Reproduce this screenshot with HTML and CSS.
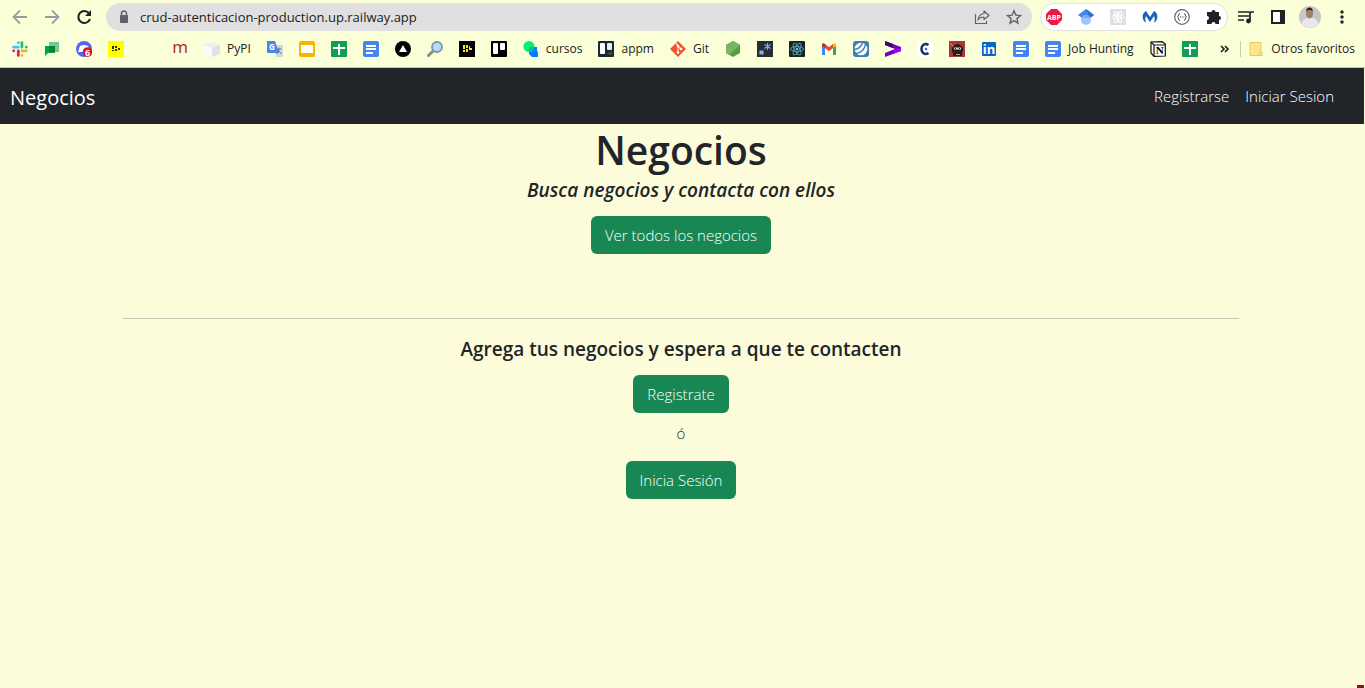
FILE: index.html
```html
<!DOCTYPE html>
<html lang="es">
<head>
<meta charset="utf-8">
<title>Negocios</title>
<link rel="stylesheet" href="styles.css">
</head>
<body>
<svg class="defs" width="0" height="0" aria-hidden="true">
  <symbol id="docs" viewBox="0 0 16 16"><rect width="16" height="16" rx="2" fill="#4285f4"/><path d="M3 4h10v2H3zM3 7h10v2H3zM3 11h7v2H3z" fill="#fff"/></symbol>
  <symbol id="sheets" viewBox="0 0 16 16"><rect width="16" height="16" rx="1" fill="#0f9d58"/><path d="M7 3h2v3h5v2H9v6H7V8H2V6h5z" fill="#fff"/></symbol>
</svg>
<header class="browser">
  <div class="toolbar">
    <button class="nav-btn" aria-label="Atrás"><svg class="i16" viewBox="0 0 16 16"><path d="M15 8H2M8 1.500L1.500 8 8 14.500" fill="none" stroke="#9a9ca0" stroke-width="1.800"/></svg></button>
    <button class="nav-btn" aria-label="Adelante"><svg class="i16" viewBox="0 0 16 16"><path d="M1 8h13M8 1.500L14.500 8 8 14.500" fill="none" stroke="#9a9ca0" stroke-width="1.800"/></svg></button>
    <button class="nav-btn" aria-label="Recargar"><svg class="i16" viewBox="0 0 16 16"><path d="M13 4.200A6 6 0 1 0 14 10" fill="none" stroke="#202124" stroke-width="2.100"/><path d="M15 1v6H9z" fill="#202124"/></svg></button>
    <div class="address">
      <svg class="i16" viewBox="0 0 16 16"><path d="M5.500 7V4.500a2.500 2.500 0 0 1 5 0V7" fill="none" stroke="#5f6368" stroke-width="1.500"/><rect x="4" y="6" width="8" height="8" rx="1" fill="#5f6368"/></svg>
      <input class="url" type="text" aria-label="Dirección" value="crud-autenticacion-production.up.railway.app">
      <button class="nav-btn" aria-label="Compartir"><svg class="i16" viewBox="0 0 16 16"><path d="M1.500 5v9.500h11V12M10 2l5 4.500-5 4V8C7 8 5 9 4 11c.3-3.500 2.500-6 6-6.500z" fill="none" stroke="#5f6368" stroke-width="1.200" stroke-linejoin="round"/></svg></button>
      <button class="nav-btn" aria-label="Favorito"><svg class="i16" viewBox="0 0 16 16"><path d="M8 1.800l1.800 4.300 4.700.4-3.600 3.100 1.100 4.600L8 11.700l-4 2.500 1.100-4.600-3.600-3.100 4.700-.4z" fill="none" stroke="#5f6368" stroke-width="1.400"/></svg></button>
    </div>
    <div class="extensions">
      <svg class="i16" viewBox="0 0 16 16"><path d="M5 0h6l5 5v6l-5 5H5l-5-5V5z" fill="#ed1944"/><text x="8" y="11" font-size="7" font-weight="700" fill="#fff" text-anchor="middle">ABP</text></svg>
      <svg class="i16" viewBox="0 0 16 16"><path d="M8 0L0 6l4 3h8l4-3z" fill="#4285f4"/><path d="M8 0l8 6-4 3z" fill="#356ac3"/><circle cx="8" cy="11" r="5" fill="#a0c3ff"/><path d="M3.500 9a5 5 0 0 1 9 0z" fill="#76a7fa"/></svg>
      <svg class="i16" viewBox="0 0 16 16"><rect width="16" height="16" fill="#dfdfdf"/><g fill="none" stroke="#fff"><ellipse cx="8" cy="8" rx="6" ry="2.300"/><ellipse cx="8" cy="8" rx="6" ry="2.300" transform="rotate(60 8 8)"/><ellipse cx="8" cy="8" rx="6" ry="2.300" transform="rotate(120 8 8)"/></g><circle cx="8" cy="8" r="1.400" fill="#fff"/></svg>
      <svg class="i16" viewBox="0 0 16 16"><path d="M4 2l4 6 4-6c3 1.500 4 5 3 8-.5 2-1.500 3-3 3.500 1-2.500 1-4 0-6.500l-4 6-4-6c-1 2.500-1 4 0 6.500-1.500-.5-2.500-1.500-3-3.500-1-3 0-6.500 3-8z" fill="#1c62b5"/></svg>
      <svg class="i16" viewBox="0 0 16 16"><circle cx="8" cy="8" r="7.300" fill="#fff" stroke="#666" stroke-width="1.200"/><path d="M6 4.500c-2 0-1 3-2.500 3.500C5 8.500 4 11.500 6 11.500M10 4.500c2 0 1 3 2.500 3.500C11 8.500 12 11.500 10 11.500" fill="none" stroke="#555"/><path d="M6 7.500h1v1H6zM7.700 7.500h1v1h-1zM9.400 7.500h1v1h-1z" fill="#555"/></svg>
      <svg class="i16" viewBox="0 0 16 16"><path d="M1 3h4.500a2 2 0 1 1 4 0H13v4a2 2 0 1 1 0 4v4H9.500a2 2 0 0 0-4 0H1v-4a2 2 0 0 0 0-4z" fill="#202124"/></svg>
    </div>
    <div class="tools">
      <svg class="i16" viewBox="0 0 16 16"><path d="M0 3h11M0 7h11M0 11h6M12 12V3h4" fill="none" stroke="#202124" stroke-width="1.700"/><circle cx="10.500" cy="12" r="2.400" fill="#202124"/></svg>
      <svg class="i16" viewBox="0 0 16 16"><path d="M1 1h14v14H1z" fill="#202124"/><path d="M3 3h7v10H3z" fill="#fff"/></svg>
      <svg class="avatar" viewBox="0 0 22 22"><circle cx="11" cy="11" r="11" fill="#c8c7c5"/><path d="M3 18c0-5 4-6 8-6s8 1 8 6c-4 5-12 5-16 0z" fill="#e8e8ee"/><ellipse cx="10.500" cy="7.500" rx="3.500" ry="5" fill="#a67c64"/><path d="M7 5.500c0-5.500 7-5.500 7 0-1-2-6-2-7 0z" fill="#2c2524"/></svg>
      <svg class="i16" viewBox="0 0 16 16"><g fill="#202124"><circle cx="8" cy="3" r="1.700"/><circle cx="8" cy="8" r="1.700"/><circle cx="8" cy="13" r="1.700"/></g></svg>
    </div>
  </div>
  <nav class="bookmarks" aria-label="Favoritos">
    <svg class="i16" viewBox="0 0 16 16"><g stroke-width="2.800" stroke-linecap="round"><path d="M6.300 1.600v.2M1.600 6.200h4.700" stroke="#36c5f0"/><path d="M9.900 1.600v4.600M14.300 6.200h.1" stroke="#2eb67d"/><path d="M9.900 9.800h4.500M9.900 14.300v.1" stroke="#ecb22e"/><path d="M6.300 9.800v4.600M1.600 9.800h.2" stroke="#e01e5a"/></g></svg>
    <svg class="i16" viewBox="0 0 16 16"><path d="M5 1h10v10H5z" fill="#76c88e"/><path d="M1 5h10v7H4l-3 3z" fill="#00a545"/><path d="M5 5h6v6H5z" fill="#087f3e"/></svg>
    <svg class="i16" viewBox="0 0 16 16"><circle cx="8" cy="8" r="8" fill="#5865f2"/><path d="M4 5q4-2 8 0l2 6H2z" fill="#fff"/><circle cx="11.500" cy="11" r="4.800" fill="#d8171e"/><text x="11.500" y="14.500" font-size="9" font-weight="700" fill="#fff" text-anchor="middle">6</text></svg>
    <svg class="i16" viewBox="0 0 16 16"><path d="M0 0h16v16H0z" fill="#ff0"/><path d="M4 5h2v3H4zM7 5h2v2H7zM4 9h2v1H4zM7 8h2v2H7zM10 7h2v2h-2z" fill="#333300"/></svg>
    <span class="i16"></span>
    <svg class="i16" viewBox="0 0 16 16"><text x="8" y="12" font-size="17" fill="#a61e2b" text-anchor="middle">m</text></svg>
    <a class="mark" href="#"><svg class="i16" viewBox="0 0 16 16"><path d="M0 4l8-3 8 3v9l-8 3-8-3z" fill="#efefef"/><path d="M0 4l8 3v9l-8-3z" fill="#fafafa"/><path d="M8 7l8-3v9l-8 3z" fill="#e2e2e2"/></svg>PyPI</a>
    <svg class="i16" viewBox="0 0 16 16"><path d="M7 4h9v12H9z" fill="#d5d7db"/><path d="M0 0h8l4 12H1a1 1 0 0 1-1-1z" fill="#4688f1"/><text x="5" y="9" font-size="8" font-weight="700" fill="#fff" text-anchor="middle">G</text><path d="M9.500 8h5M12 6.500V8c-.3 3-1 4-2.500 5M11 9l3.500 4" stroke="#607988" fill="none"/></svg>
    <svg class="i16" viewBox="0 0 16 16"><rect width="16" height="16" rx="2" fill="#f8b400"/><path d="M2 4h12v8H2z" fill="#fff"/></svg>
    <svg class="i16"><use href="#sheets"/></svg>
    <svg class="i16"><use href="#docs"/></svg>
    <svg class="i16" viewBox="0 0 16 16"><circle cx="8" cy="8" r="8"/><path d="M8 4l4 7H4z" fill="#fff"/></svg>
    <svg class="i16" viewBox="0 0 16 16"><path d="M1.500 14.500L6 10" stroke="#8b8c8c" stroke-width="3" stroke-linecap="round"/><circle cx="10" cy="6" r="5" fill="#badaf4" stroke="#7897a5" stroke-width="1.800"/></svg>
    <svg class="i16" viewBox="0 0 16 16"><path d="M0 0h16v16H0z"/><path d="M4 4h2v4H4zM7 4h2v3H7zM4 9h2v2H4zM7 8h2v3H7zM10 5h1v4h-1zM11 7h2v2h-2z" fill="#f8ed12"/></svg>
    <svg class="i16" viewBox="0 0 16 16"><rect width="16" height="16" rx="1"/><rect x="2" y="2" width="5" height="11" rx="1" fill="#fff"/><rect x="9" y="2" width="5" height="7" rx="1" fill="#fff"/></svg>
    <a class="mark" href="#"><svg class="i16" viewBox="0 0 16 16"><path d="M6 6h8v4l1 1v5H9l-3-3z" fill="#087cff"/><circle cx="6" cy="5.500" r="5.500" fill="#00f078"/><path d="M6 6h5.500a5.500 5.500 0 0 1-5.500 5z" fill="#00b7a2"/></svg>cursos</a>
    <a class="mark" href="#"><svg class="i16" viewBox="0 0 16 16"><rect width="16" height="16" rx="1" fill="#1c2830"/><path d="M8 13l6-3v4z" fill="#504538"/><rect x="2" y="2" width="5" height="11" rx="1" fill="#fff"/><rect x="9" y="2" width="5" height="7" rx="1" fill="#e9eef2"/></svg>appm</a>
    <a class="mark" href="#"><svg class="i16" viewBox="0 0 16 16"><path d="M8 0l8 8-8 8-8-8z" fill="#f5522d"/><path d="M6 2l2 3v7M8 5l3 3" fill="none" stroke="#fff" stroke-width="1.100"/><g fill="#fff"><circle cx="8" cy="5" r="1.300"/><circle cx="11" cy="8" r="1.300"/><circle cx="8" cy="11.500" r="1.300"/></g></svg>Git</a>
    <svg class="i16" viewBox="0 0 16 16"><path d="M8 0l7 4v8l-7 4-7-4V4z" fill="#539e43"/><path d="M8 0l7 4L4 13.700 1 12V4z" fill="#78b461"/></svg>
    <svg class="i16" viewBox="0 0 16 16"><path d="M0 0h16v16H0z" fill="#292d33"/><path d="M3 10h3v3H3zM10.500 2v7M7.500 3.500l6 4M13.500 3.500l-6 4" fill="#77b6eb" stroke="#77b6eb" stroke-width="1.100"/></svg>
    <svg class="i16" viewBox="0 0 16 16"><rect width="16" height="16" rx="1" fill="#202124"/><g fill="none" stroke="#4ba8bd" stroke-width=".9"><ellipse cx="8" cy="8" rx="6.500" ry="2.500"/><ellipse cx="8" cy="8" rx="6.500" ry="2.500" transform="rotate(60 8 8)"/><ellipse cx="8" cy="8" rx="6.500" ry="2.500" transform="rotate(120 8 8)"/></g><circle cx="8" cy="8" r="1.200" fill="#61dafb"/></svg>
    <svg class="i16" viewBox="0 0 16 16"><path d="M1 4h3v10H2a1 1 0 0 1-1-1z" fill="#4285f4"/><path d="M12 4h3v9a1 1 0 0 1-1 1h-2z" fill="#34a853"/><path d="M4 3l4 3.200L12 3v4L8 10.300 4 7z" fill="#ea4335"/><path d="M1 4c0-2 2-2 3-1v4L1 5z" fill="#c5221f"/><path d="M15 4c0-2-2-2-3-1v4l3-2z" fill="#fbbc04"/></svg>
    <svg class="i16" viewBox="0 0 16 16"><rect width="16" height="16" rx="3" fill="#3e7eb8"/><circle cx="8" cy="8" r="6.300" fill="#fff"/><path d="M1.500 8.500C6 8 8.500 5 9.500 1.500M3 12.500c5-.5 9-4.500 9.500-9.500" fill="none" stroke="#3e7eb8" stroke-width="1.400"/></svg>
    <svg class="i16" viewBox="0 0 16 16"><path d="M0 0l16 6v4L0 16v-4l10-4L0 4z" fill="#7500c0"/><path d="M0 0l8 3v4L0 4z" fill="#450073"/><path d="M10 8l6-1v3L8 13z" fill="#a100ff"/></svg>
    <svg class="i16" viewBox="0 0 16 16"><path d="M0 0h16v16H0z" fill="#fff"/><path d="M11.500 4C7.500 1.500 4.500 4.500 4.500 8s3 6.500 7 4" fill="none" stroke="#17345f" stroke-width="2.600"/><circle cx="9" cy="8" r="1.300" fill="#2e72d2"/></svg>
    <svg class="i16" viewBox="0 0 16 16"><path d="M0 0h16v16H0z" fill="#ad3636"/><path d="M1 2l11 12" stroke="#d4a844"/><path d="M4 15v-3a5.500 5.500 0 1 1 9 0v3z" fill="#211f20"/><path d="M5 6.500h7v2H5z" fill="#efd6b8"/><path d="M6 7h1v1H6zM10 7h1v1h-1z" fill="#222"/><path d="M7 13h4v1H7z" fill="#aaa"/></svg>
    <svg class="i16" viewBox="0 0 16 16"><rect x="1" y="1" width="14" height="14" rx="1" fill="#0a66c2"/><text x="8" y="13" font-size="13" font-weight="700" fill="#fff" text-anchor="middle">in</text></svg>
    <svg class="i16"><use href="#docs"/></svg>
    <a class="mark" href="#"><svg class="i16"><use href="#docs"/></svg>Job Hunting</a>
    <svg class="i16" viewBox="0 0 16 16"><path d="M1 1l11-.3L15.300 3v12L4 15.300 1 12z" fill="#fff" stroke="#111" stroke-width="1.200"/><path d="M1 1l3 3h11M4 4v11" fill="none" stroke="#111" stroke-width="1.200"/><text class="serif" x="9.700" y="13" font-size="11" font-weight="700" text-anchor="middle">N</text></svg>
    <svg class="i16"><use href="#sheets"/></svg>
    <div class="overflow">
      <button class="nav-btn" aria-label="Más favoritos"><svg class="i16" viewBox="0 0 16 16"><path d="M4 5l3 3-3 3M8 5l3 3-3 3" fill="none" stroke="#202124" stroke-width="1.700"/></svg></button>
      <span class="divider"></span>
      <a class="mark" href="#"><svg class="i16" viewBox="0 0 16 16"><path d="M2 1.500h11v13H2z" fill="#ffe58f" stroke="#edc85b"/><path d="M11 11h3v3.500h-3z" fill="#ffe58f" stroke="#edc85b"/></svg>Otros favoritos</a>
    </div>
  </nav>
</header>
<nav class="navbar">
  <a class="brand" href="#">Negocios</a>
  <div class="links"><a href="#">Registrarse</a><a href="#">Iniciar Sesion</a></div>
</nav>
<main class="page">
  <div class="container">
    <h1>Negocios</h1>
    <h2 class="lead">Busca negocios y contacta con ellos</h2>
    <button class="btn">Ver todos los negocios</button>
    <hr>
    <h2>Agrega tus negocios y espera a que te contacten</h2>
    <button class="btn">Registrate</button>
    <p>ó</p>
    <button class="btn">Inicia Sesión</button>
  </div>
</main>
<span class="corner"></span>
</body>
</html>
```
FILE: styles.css
```css
* { box-sizing: border-box; }
body {
  margin: 0;
  min-height: 100vh;
  position: relative;
  background: #fcfbda;
  color: #212529;
  font: 15px/24px "Open Sans", "Noto Sans", sans-serif;
}
a { color: inherit; text-decoration: none; }
button { font: inherit; color: inherit; border: 0; cursor: pointer; }
.defs { position: absolute; }
.i16 { display: block; width: 16px; height: 16px; flex: none; }
.serif { font-family: "Liberation Serif", serif; }
.browser {
  background: #fbffd7;
  border-bottom: 1px solid #c4c5bd;
  height: 68px;
  color: #202124;
  font-size: 12px;
}
.toolbar {
  display: flex;
  align-items: center;
  gap: 16px;
  height: 34px;
  padding: 0 15px 0 12px;
}
.nav-btn { display: block; padding: 0; background: none; }
.address {
  display: flex;
  flex: 1;
  align-items: center;
  gap: 16px;
  height: 28px;
  margin-left: -2px;
  padding: 0 10px;
  border-radius: 14px;
  background: #e0e0e0;
}
.url {
  flex: 1;
  min-width: 0;
  margin-left: -8px;
  padding: 0;
  border: 0;
  background: none;
  color: #202124;
  font: 13px/20px "Open Sans", "Noto Sans", sans-serif;
}
.extensions {
  display: flex;
  align-items: center;
  gap: 16px;
  height: 28px;
  margin-left: -8px;
  padding: 0 5px;
  border: 1px solid #e2e4d8;
  border-radius: 14px;
  background: #fff;
}
.tools { display: flex; align-items: center; gap: 16px; margin-left: -6px; }
.avatar { width: 22px; height: 22px; margin: 0 -3px; }
.bookmarks {
  display: flex;
  align-items: center;
  gap: 16px;
  height: 30px;
  padding: 0 10px 0 12px;
  white-space: nowrap;
}
.mark { display: flex; align-items: center; gap: 7px; }
.overflow { display: flex; align-items: center; gap: 7px; margin-left: auto; }
.divider { width: 1px; height: 16px; background: #c9cbb5; }
.navbar {
  display: flex;
  align-items: center;
  justify-content: space-between;
  height: 56px;
  margin-right: 1px;
  padding: 0 30px 0 10px;
  background: #212529;
  color: #fff;
}
.brand { padding-top: 4px; font-size: 20px; line-height: 30px; }
.links { display: flex; gap: 16px; font-weight: 300; }
.page { padding: 2px 3px 0 0; text-align: center; }
.container { max-width: 1140px; margin: 0 auto; padding: 0 12px; }
h1 { margin: 0 0 4px; font-size: 39px; font-weight: 600; line-height: 48px; }
h2 { margin: 0 0 14px; font-size: 19px; font-weight: 600; line-height: 24px; }
.lead { font-style: italic; }
.btn {
  padding: 7px 14px;
  border-radius: 6px;
  background: #198754;
  color: #fff;
  font-weight: 300;
}
hr { margin: 64px 0 18px; border: 0; border-top: 1px solid #c6c6b4; }
p { margin: 8px 0 16px; font-weight: 300; }
.corner {
  position: absolute;
  right: 1px;
  bottom: 0;
  width: 7px;
  height: 3px;
  background: #990f0f;
}
```
